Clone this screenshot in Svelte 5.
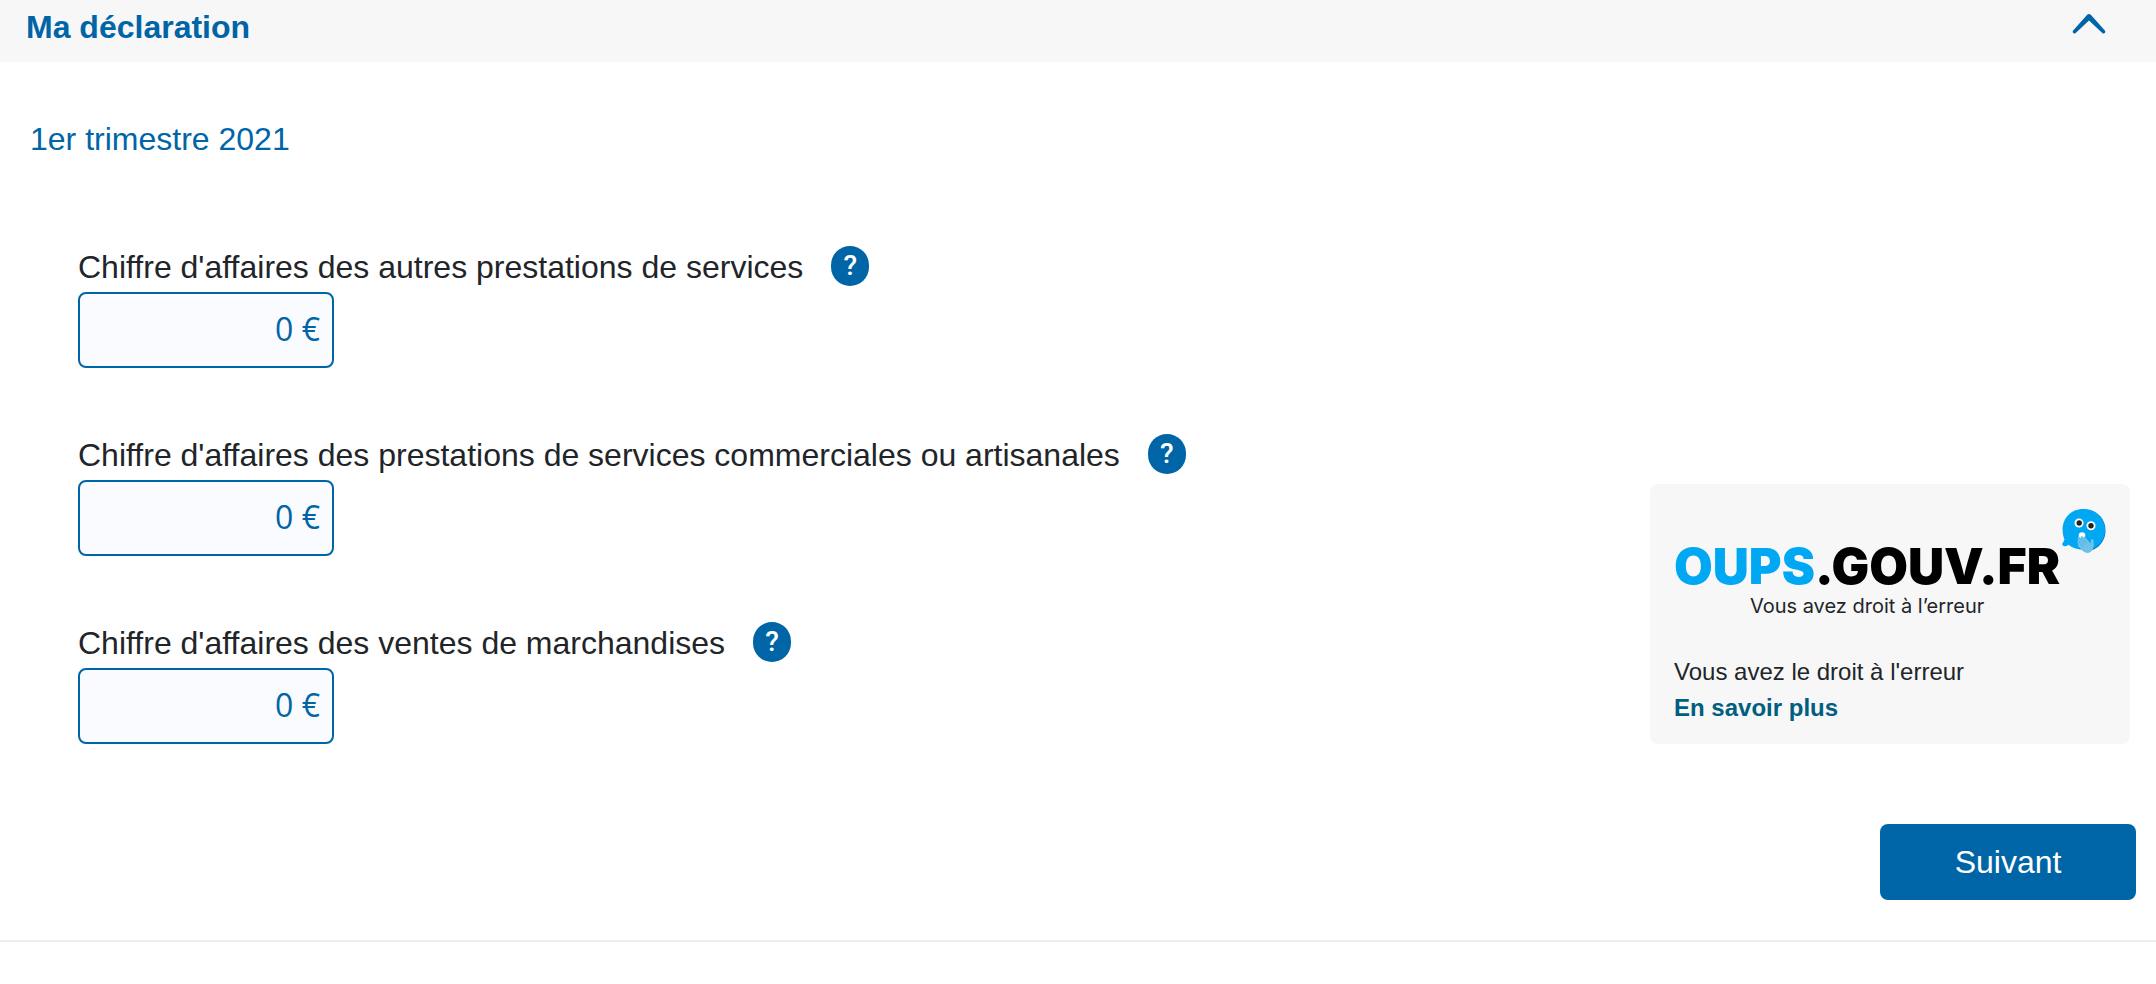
<script>
	let open = $state(true)

	let fields = $state([
		{ id: 'services', label: "Chiffre d'affaires des autres prestations de services", value: '0 €' },
		{ id: 'artisanat', label: "Chiffre d'affaires des prestations de services commerciales ou artisanales", value: '0 €' },
		{ id: 'ventes', label: "Chiffre d'affaires des ventes de marchandises", value: '0 €' }
	])
</script>

<section class="panel">
	<header>
		<h1>Ma déclaration</h1>
		<button class="toggle" type="button" aria-label="Ma déclaration" aria-expanded={open} onclick={() => (open = !open)}>
			<svg class:closed={!open} width="34" height="20" viewBox="0 0 34 20">
				<path d="M15.200.800Q17 -.8 18.800.800L33.100 16.800Q33.600 18.200 32.700 19 31.600 20 30.300 18.900L17 6.600 3.700 18.900Q2.400 20 1.300 19 .4 18.200.9 16.800z" />
			</svg>
		</button>
	</header>

	{#if open}
		<form onsubmit={(e) => e.preventDefault()}>
			<h2>1er trimestre 2021</h2>

			<div class="content">
				<div class="fields">
					{#each fields as field (field.id)}
						<div class="field">
							<div class="label">
								<label for={field.id}>{field.label}</label>
								<button class="help" type="button" aria-label="Aide">?</button>
							</div>
							<input id={field.id} type="text" inputmode="decimal" bind:value={field.value} />
						</div>
					{/each}
				</div>

				<aside>
					<div class="logo">
						<div class="brand">
							<div class="name"><span>OUPS</span>.GOUV.FR</div>
							<div class="tagline">Vous avez droit à l’erreur</div>
						</div>
						<svg class="face" width="44" height="46" viewBox="0 0 44 46">
							<path fill="#0079bd" d="M23 2C36 3 43.500 11 43.500 22.500 43.500 34 35 43 24 43z" />
							<path fill="#00a8f3" d="M21 1C33 .5 43 9 43 21.500 43 34 34 42 23 42 16 42 10.500 40 6.500 36.800 4 38.500 1.500 38.800.8 37.500-.2 36 .6 34.500 1.600 33.800L2.200 31.500 3 32.600C1.500 29.500.6 26 .6 22 .6 10 9 1 21 1z" />
							<circle cx="17" cy="15" r="4.500" fill="#fff" />
							<circle cx="17.200" cy="15" r="2.700" fill="#222" />
							<circle cx="29" cy="17.700" r="4.500" fill="#fff" />
							<circle cx="29" cy="17.700" r="2.700" fill="#222" />
							<circle cx="20" cy="27.500" r="3.300" fill="#fff" />
							<path fill="#6ec2ea" d="M15.800 29.200Q16.500 28 17.500 29L18.500 30.400Q18.600 27.900 20 28.100L21.300 29.800Q22.200 27.800 23.300 29.200L28.600 35.500 29 31.800Q30.500 30.400 31.700 32.200V38.600Q31 42 28.400 44.200 24.500 46 21.400 43.500L16.400 38.600Q15 37 16.200 36.500L15.600 34.500Q14.800 33 16 32.500z" />
							<path fill="none" stroke="#3fb0e5" stroke-width=".7" d="M17.500 29.500 22.500 37M20.300 29 24.600 35.500M16.300 33 21 39" />
						</svg>
					</div>
					<p>Vous avez le droit à l'erreur</p>
					<a href="#oups">En savoir plus</a>
				</aside>
			</div>

			<div class="actions">
				<button class="next" type="submit">Suivant</button>
			</div>
		</form>
	{/if}
</section>

<style>
	:global(body) {
		margin: 0;
		background: #fff;
		color: #212529;
		font-family: "Liberation Sans", Arial, sans-serif;
		font-size: 32px;
	}
	.panel {
		border-bottom: 2px solid #ececec;
	}
	header {
		display: flex;
		align-items: flex-start;
		justify-content: space-between;
		box-sizing: border-box;
		height: 62px;
		padding: 8px 50px 0 26px;
		background: #f7f7f7;
	}
	h1,
	h2 {
		margin: 0;
		color: #0065a7;
		font-size: 32px;
		line-height: 38px;
	}
	h2 {
		padding: 58px 30px 0;
		font-weight: 400;
	}
	button {
		border: 0 none;
		padding: 0;
		font-family: inherit;
		cursor: pointer;
	}
	.toggle {
		display: flex;
		padding-top: 6px;
		background: transparent;
	}
	.toggle path {
		fill: #0065a7;
	}
	.closed {
		transform: rotate(180deg);
	}
	.content {
		display: flex;
		align-items: flex-end;
		justify-content: space-between;
		padding: 88px 26px 0 78px;
	}
	.fields {
		display: flex;
		flex-direction: column;
		gap: 66px;
	}
	.label {
		display: flex;
		align-items: flex-start;
		gap: 28px;
		margin-bottom: 4px;
	}
	label {
		line-height: 42px;
	}
	.help {
		width: 38px;
		height: 40px;
		border-radius: 20px;
		background: #0065a7;
		color: #fff;
		font-family: Roboto, sans-serif;
		font-size: 28px;
		font-weight: 500;
		line-height: 38px;
	}
	input {
		display: block;
		box-sizing: border-box;
		width: 256px;
		height: 76px;
		padding: 0 12px 4px;
		border: 2px solid #0065a7;
		border-radius: 8px;
		background: #fafbfe;
		color: #0065a7;
		font-family: "Open Sans", sans-serif;
		font-size: 32px;
		font-weight: 500;
		text-align: right;
	}
	aside {
		box-sizing: border-box;
		width: 480px;
		padding: 24px 24px 18px;
		border-radius: 8px;
		background: #f7f7f7;
		font-size: 24px;
		line-height: 36px;
	}
	.logo {
		display: flex;
		justify-content: space-between;
		margin-bottom: 36px;
	}
	.brand {
		padding-top: 30px;
	}
	.name {
		font-family: Inter, sans-serif;
		font-size: 50px;
		font-weight: 900;
		line-height: 56px;
		color: #000;
		white-space: nowrap;
	}
	.name span {
		color: #00a8f3;
	}
	.tagline {
		font-family: Inter, sans-serif;
		font-size: 20px;
		font-weight: 400;
		line-height: 24px;
		text-align: center;
	}
	p {
		margin: 0;
	}
	a {
		color: #005e80;
		font-weight: 700;
		text-decoration: none;
	}
	.actions {
		display: flex;
		justify-content: flex-end;
		padding: 80px 20px 40px;
	}
	.next {
		width: 256px;
		height: 76px;
		border-radius: 8px;
		background: #0065a7;
		color: #fff;
		font-size: 32px;
	}
</style>
